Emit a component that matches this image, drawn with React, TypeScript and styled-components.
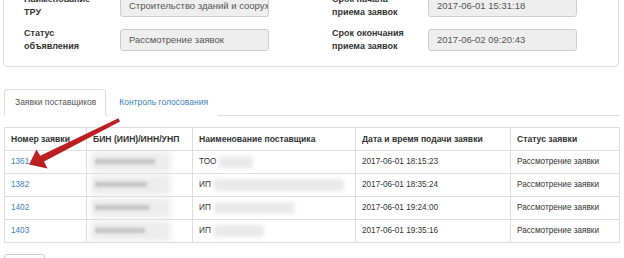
import React from 'react';
import styled, { createGlobalStyle } from 'styled-components';

const GlobalStyle = createGlobalStyle`
  body {
    margin: 0;
    background: #fff;
    font-family: 'Liberation Sans', Arial, sans-serif;
    color: #333;
    overflow: hidden;
  }
`;

const Page = styled.div`
  position: relative;
  width: 624px;
  height: 258px;
  overflow: hidden;
  padding: 0 5px 0 3px;
  box-sizing: border-box;
`;

const Panel = styled.div`
  margin-top: -22px;
  border: 1px solid #ddd;
  border-radius: 4px;
  padding: 14px 0 13px;
  display: grid;
  grid-template-columns: 308px 1fr;
  row-gap: 8px;
`;

const Field = styled.div`
  display: flex;
  align-items: center;
  padding-left: 20px;
`;

const Label = styled.div`
  width: 80px;
  margin-right: 16px;
  font-size: 9px;
  font-weight: bold;
  line-height: 13px;
  color: #333;
`;

const ReadOnly = styled.div`
  width: 149px;
  height: 22px;
  box-sizing: border-box;
  background: #eee;
  border: 1px solid #ccc;
  border-radius: 3px;
  padding: 0 8px;
  font-size: 9.5px;
  line-height: 20px;
  color: #555;
  white-space: nowrap;
  overflow: hidden;
`;

const Tabs = styled.div`
  margin: 22px 0 0 1px;
  display: flex;
  border-bottom: 1px solid #ddd;
  height: 26px;
`;

const Tab = styled.div<{ active?: boolean }>`
  margin-right: 2px;
  margin-bottom: -1px;
  padding: 0 9px 0 10px;
  font-size: 8.5px;
  line-height: 25px;
  border: 1px solid ${p => (p.active ? '#ddd' : 'transparent')};
  border-bottom-color: ${p => (p.active ? '#fff' : 'transparent')};
  border-radius: 4px 4px 0 0;
  background: #fff;
  color: ${p => (p.active ? '#555' : '#3a7fc0')};
`;

const Table = styled.table`
  margin: 11px 0 0 1px;
  width: 615px;
  border-collapse: collapse;
  table-layout: fixed;
  font-size: 8.2px;
  border: 1px solid #ddd;
`;

const Th = styled.th<{ w: number }>`
  box-sizing: border-box;
  width: ${p => p.w}px;
  height: 23px;
  text-align: left;
  font-size: 8.6px;
  font-weight: bold;
  color: #333;
  padding: 0 6px;
  line-height: 12px;
  border: 1px solid #ddd;
  white-space: nowrap;
  overflow: hidden;
`;

const Td = styled.td`
  box-sizing: border-box;
  height: 23px;
  padding: 0 6px;
  line-height: 12px;
  border: 1px solid #ddd;
  color: #333;
  white-space: nowrap;
  overflow: hidden;
`;

const RowLink = styled.span`
  color: #3a7fc0;
`;

const Blur = styled.span<{ w: number }>`
  display: inline-block;
  vertical-align: top;
  width: ${p => p.w}px;
  height: 12px;
  margin-left: 3px;
  background: #e9e9e9;
  filter: blur(2px);
`;

const BinCell = styled.span`
  position: relative;
  display: inline-block;
  vertical-align: top;
  width: 82px;
  height: 12px;
`;

const BinBack = styled.span`
  position: absolute;
  left: -2px;
  top: -4px;
  width: 80px;
  height: 20px;
  background: #ececec;
  filter: blur(3px);
`;

const BinText = styled.span<{ w: number }>`
  position: absolute;
  left: 2px;
  top: 3px;
  width: ${p => p.w}px;
  height: 5px;
  background: #c4c4c4;
  filter: blur(1.5px);
`;

const Button = styled.div`
  margin: 11px 0 0 1px;
  width: 41px;
  height: 20px;
  box-sizing: border-box;
  border: 1px solid #ccc;
  border-radius: 3px;
`;

const Arrow = styled.svg`
  position: absolute;
  left: 0;
  top: 0;
`;

const rows = [
  { id: '1361', bin: 60, org: 'ТОО', name: 34, date: '2017-06-01 18:15:23' },
  { id: '1382', bin: 52, org: 'ИП', name: 130, date: '2017-06-01 18:35:24' },
  { id: '1402', bin: 54, org: 'ИП', name: 80, date: '2017-06-01 19:24:00' },
  { id: '1403', bin: 50, org: 'ИП', name: 50, date: '2017-06-01 19:35:16' },
];

export default function App() {
  return (
    <Page>
      <GlobalStyle />
      <Panel>
        <Field>
          <Label>Наименование ТРУ</Label>
          <ReadOnly>Строительство зданий и сооружений</ReadOnly>
        </Field>
        <Field>
          <Label>Срок начала приема заявок</Label>
          <ReadOnly>2017-06-01 15:31:18</ReadOnly>
        </Field>
        <Field>
          <Label>Статус объявления</Label>
          <ReadOnly>Рассмотрение заявок</ReadOnly>
        </Field>
        <Field>
          <Label>Срок окончания приема заявок</Label>
          <ReadOnly>2017-06-02 09:20:43</ReadOnly>
        </Field>
      </Panel>

      <Tabs>
        <Tab active>Заявки поставщиков</Tab>
        <Tab>Контроль голосования</Tab>
      </Tabs>

      <Table>
        <thead>
          <tr>
            <Th w={82}>Номер заявки</Th>
            <Th w={106}>БИН (ИИН)/ИНН/УНП</Th>
            <Th w={163}>Наименование поставщика</Th>
            <Th w={155}>Дата и время подачи заявки</Th>
            <Th w={109}>Статус заявки</Th>
          </tr>
        </thead>
        <tbody>
          {rows.map(r => (
            <tr key={r.id}>
              <Td>
                <RowLink>{r.id}</RowLink>
              </Td>
              <Td>
                <BinCell>
                  <BinBack />
                  <BinText w={r.bin} />
                </BinCell>
              </Td>
              <Td>
                {r.org}
                <Blur w={r.name} />
              </Td>
              <Td>{r.date}</Td>
              <Td>Рассмотрение заявки</Td>
            </tr>
          ))}
        </tbody>
      </Table>

      <Button />

      <Arrow width="624" height="258" viewBox="0 0 624 258">
        <defs>
          <linearGradient id="arrowFill" x1="0" y1="0" x2="1" y2="1">
            <stop offset="0" stopColor="#d3262a" />
            <stop offset="1" stopColor="#a3171a" />
          </linearGradient>
        </defs>
        <path
          d="M118.5 118.2 L120 121.4 L44 161.5 L47.5 168.5 L29 164.5 L36.5 149.5 L40.2 155.8 Z"
          fill="url(#arrowFill)"
        />
      </Arrow>
    </Page>
  );
}
